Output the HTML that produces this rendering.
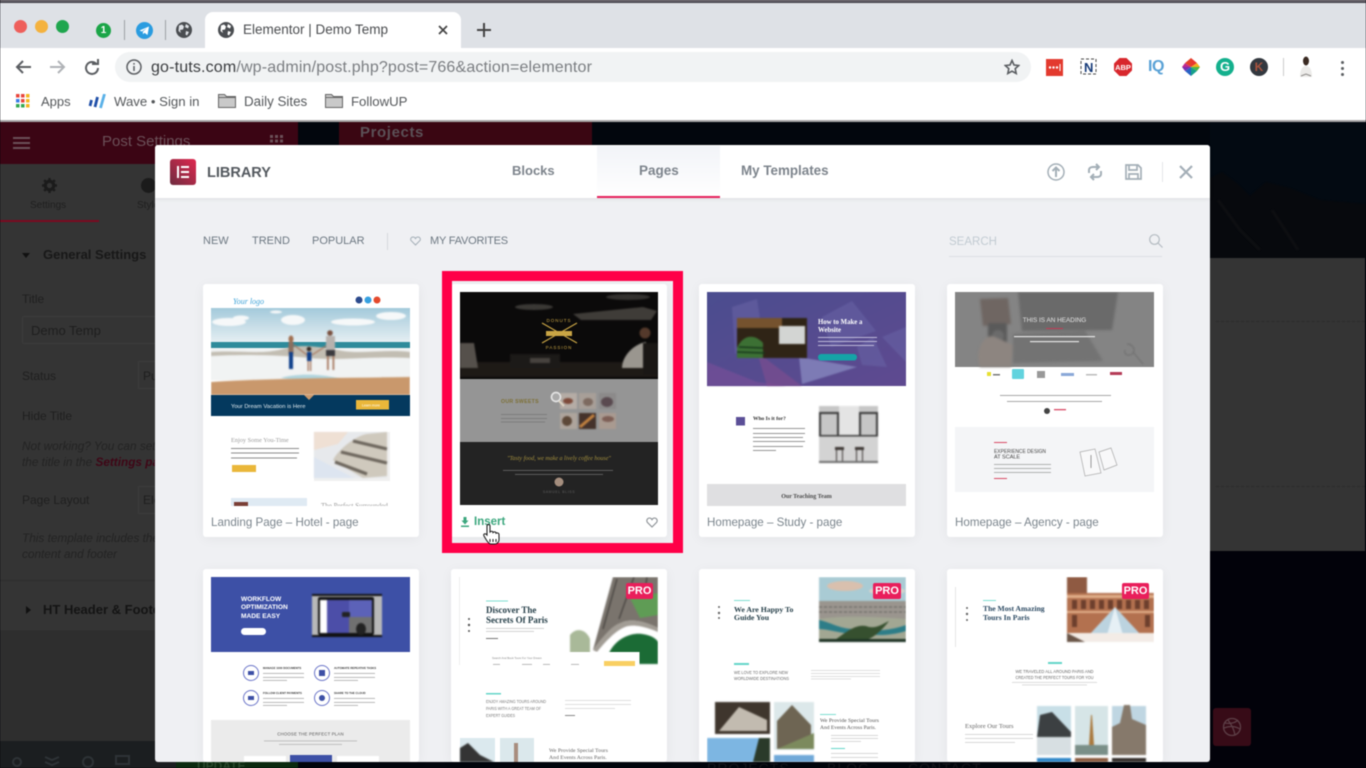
<!DOCTYPE html>
<html lang="en"><head><meta charset="utf-8"><title>Elementor | Demo Temp</title>
<style>
*{box-sizing:border-box}
html,body{margin:0;padding:0;width:1366px;height:768px;overflow:hidden;background:#02020a}
body{font-family:"Liberation Sans",sans-serif}
#w{position:absolute;left:0;top:0;width:1366px;height:768px;overflow:hidden;filter:blur(.5px)}
.a{position:absolute}
.t{position:absolute;white-space:nowrap;line-height:1}
svg{position:absolute;display:block;overflow:hidden}
.card{position:absolute;width:216px;background:#fff;border-radius:3px;box-shadow:0 2px 12px rgba(0,0,0,.05)}
.lbl{position:absolute;font-size:11.6px;color:#7b858d;white-space:nowrap;line-height:1}
.ph{filter:blur(.7px)}
</style></head><body><div id="w">

<!-- page behind -->
<div class="a" style="left:0;top:122px;width:1366px;height:646px;background:#02060d"></div>
<div class="a" style="left:1210px;top:122px;width:156px;height:136px;background:#030a12"></div>
<svg style="left:1210px;top:170px" width="156" height="88" viewBox="0 0 156 88"><path class="ph" d="M0 8 L12 2 L28 14 L40 26 L56 12 L80 18 L110 30 L156 34 V88 H0Z" fill="#07090d"/><path class="ph" d="M8 30 L30 60 L50 80 M62 40 L88 80" stroke="#0e0f12" stroke-width="3" fill="none"/></svg>
<div class="a" style="left:1210px;top:258px;width:155px;height:293px;background:#343434"></div>
<div class="a" style="left:1216px;top:321px;width:149px;border-top:1px dashed #2b2b2b"></div>
<div class="a" style="left:1216px;top:486px;width:149px;border-top:1px dashed #2b2b2b"></div>
<div class="a" style="left:1210px;top:551px;width:156px;height:217px;background:#02020a"></div>
<div class="a" style="left:1213px;top:708px;width:38px;height:38px;background:#370b17;border-radius:3px"></div>
<svg style="left:1222px;top:717px" width="20" height="20" viewBox="0 0 20 20" fill="none" stroke="#5d3f47" stroke-width="1.3"><circle cx="10" cy="10" r="8.5"/><path d="M3 6c5 1 10 0 13-3M2 11c5-2 11-2 16 1M6 3c3 4 6 9 7 15"/></svg>
<div class="a" style="left:339px;top:122px;width:253px;height:24px;background:#3a0612"></div>
<div class="t" style="left:360px;top:125px;font-size:15px;font-weight:bold;color:#5b5157;letter-spacing:.6px">Projects</div>

<!-- left panel -->
<div class="a" style="left:0;top:122px;width:298px;height:42px;background:#3b0514"></div>
<div class="a" style="left:13px;top:137px;width:17px;height:2px;background:#6b5058;box-shadow:0 5px #6b5058,0 10px #6b5058"></div>
<div class="t" style="left:102px;top:134px;font-size:15px;color:#6b5058">Post Settings</div>
<svg style="left:270px;top:135px" width="15" height="12"><g fill="#6b5058"><rect width="3" height="3"/><rect x="5" width="3" height="3"/><rect x="10" width="3" height="3"/><rect y="4.500" width="3" height="3"/><rect x="5" y="4.500" width="3" height="3"/><rect x="10" y="4.500" width="3" height="3"/></g></svg>
<div class="a" style="left:0;top:164px;width:298px;height:477px;background:#343434"></div>
<svg style="left:42px;top:178px" width="15" height="15" viewBox="0 0 16 16"><circle cx="8" cy="8" r="4.500" fill="none" stroke="#1b1b1b" stroke-width="3.400"/><path d="M8 0v3M8 13v3M0 8h3M13 8h3M2.300 2.300l2 2M11.700 11.700l2 2M2.300 13.700l2-2M11.700 4.300l2-2" stroke="#1b1b1b" stroke-width="2.600"/></svg>
<div class="t" style="left:30px;top:201px;font-size:10px;color:#1f1f1f">Settings</div>
<div class="a" style="left:141px;top:178px;width:15px;height:15px;border-radius:50%;background:#1b1b1b"></div>
<div class="t" style="left:137px;top:201px;font-size:10px;color:#1f1f1f">Style</div>
<div class="a" style="left:0;top:220px;width:99px;height:2px;background:#7a0a20"></div>
<div class="a" style="left:22px;top:253px;border:4px solid transparent;border-top:5px solid #111;border-bottom:0"></div>
<div class="t" style="left:43px;top:248px;font-size:13px;font-weight:bold;color:#181818">General Settings</div>
<div class="t" style="left:22px;top:293px;font-size:12px;color:#1f1f1f">Title</div>
<div class="a" style="left:22px;top:316px;width:200px;height:28px;border:1px solid #3c3c3c;border-radius:2px"></div>
<div class="t" style="left:31px;top:324px;font-size:13px;color:#1e1e1e">Demo Temp</div>
<div class="t" style="left:22px;top:370px;font-size:12px;color:#1f1f1f">Status</div>
<div class="a" style="left:138px;top:361px;width:60px;height:28px;border:1px solid #3c3c3c"></div>
<div class="t" style="left:143px;top:370px;font-size:12px;color:#1e1e1e">Published</div>
<div class="t" style="left:22px;top:410px;font-size:12px;color:#1f1f1f">Hide Title</div>
<div class="t" style="left:22px;top:441px;font-size:11.800px;font-style:italic;color:#232323">Not working? You can set a different selector for</div>
<div class="t" style="left:22px;top:457px;font-size:11.800px;font-style:italic;color:#232323">the title in the <b style="color:#3f0616">Settings page</b></div>
<div class="t" style="left:22px;top:494px;font-size:12px;color:#1f1f1f">Page Layout</div>
<div class="a" style="left:138px;top:486px;width:60px;height:28px;border:1px solid #3c3c3c"></div>
<div class="t" style="left:143px;top:494px;font-size:12px;color:#1e1e1e">Elementor</div>
<div class="t" style="left:22px;top:533px;font-size:11.800px;font-style:italic;color:#232323">This template includes the header, full-width</div>
<div class="t" style="left:22px;top:549px;font-size:11.800px;font-style:italic;color:#232323">content and footer</div>
<div class="a" style="left:0;top:580px;width:298px;height:1px;background:#2e2e2e"></div>
<div class="a" style="left:0;top:630px;width:298px;height:1px;background:#303030"></div>
<div class="a" style="left:26px;top:606px;border:4px solid transparent;border-left:5px solid #111;border-right:0"></div>
<div class="t" style="left:43px;top:603px;font-size:13px;font-weight:bold;color:#141414">HT Header &amp; Footer</div>
<div class="a" style="left:0;top:631px;width:298px;height:110px;background:#2e2e2e"></div>
<div class="a" style="left:0;top:741px;width:298px;height:27px;background:#1b1e20"></div>
<svg style="left:10px;top:754px" width="130" height="14" fill="none" stroke="#2e3336" stroke-width="2"><circle cx="7" cy="8" r="4"/><path d="M35 3l7 3 7-3M35 8l7 3 7-3"/><circle cx="78" cy="8" r="5"/><rect x="106" y="2" width="13" height="8"/></svg>
<div class="a" style="left:176px;top:741px;width:122px;height:27px;background:#0c2b10"></div>
<div class="t" style="left:197px;top:760px;font-size:12px;font-weight:bold;color:#2b4a2e">UPDATE</div>
<div class="t" style="left:707px;top:761px;font-size:14px;color:#17171c;letter-spacing:1px">PROJECTS</div>
<div class="t" style="left:827px;top:761px;font-size:14px;color:#17171c;letter-spacing:1px">BLOG</div>
<div class="t" style="left:908px;top:761px;font-size:14px;color:#17171c;letter-spacing:1px">CONTACT</div>

<!-- browser chrome -->
<div class="a" style="left:0;top:0;width:1366px;height:122px;background:#fff"></div>
<div class="a" style="left:0;top:0;width:1366px;height:1px;background:#9b9499"></div>
<div class="a" style="left:0;top:1px;width:1366px;height:2px;background:#4a4750"></div>
<div class="a" style="left:0;top:3px;width:1366px;height:45px;background:#dee1e6"></div>
<div class="a" style="left:0;top:120px;width:1366px;height:2px;background:#a9a7a8"></div>
<div class="a" style="left:14px;top:20px;width:13px;height:13px;border-radius:50%;background:#ee5f5b"></div>
<div class="a" style="left:35px;top:20px;width:13px;height:13px;border-radius:50%;background:#f4b23e"></div>
<div class="a" style="left:56px;top:20px;width:13px;height:13px;border-radius:50%;background:#1fa64e"></div>
<div class="a" style="left:96px;top:23px;width:15px;height:15px;border-radius:50%;background:#1ba548;color:#fff;font-size:10px;font-weight:bold;text-align:center;line-height:15px">1</div>
<div class="a" style="left:124px;top:20px;width:1px;height:20px;background:#9da0a5"></div>
<svg style="left:136px;top:22px" width="17" height="17" viewBox="0 0 17 17"><circle cx="8.500" cy="8.500" r="8.500" fill="#2a9ce0"/><path d="M3.500 8.500L13 4.500 11.500 13 8.500 10.800 7 12.300 6.800 9.800 11 6 5.800 9.500z" fill="#fff"/></svg>
<div class="a" style="left:165px;top:20px;width:1px;height:20px;background:#9da0a5"></div>
<svg style="left:176px;top:22px" width="16" height="16" viewBox="0 0 16 16"><circle cx="8" cy="8" r="8" fill="#4a4d51"/><path d="M3 3.500l3-1 2 2-1 3-3 .5 1 3-2.500-2zM10 2l3 2-1 2.500-3-1.500zM10 9l3 1-2 3.500-1.500-1z" fill="#dee1e6"/></svg>
<div class="a" style="left:205px;top:12px;width:256px;height:37px;background:#fff;border-radius:8px 8px 0 0"></div>
<svg style="left:218px;top:22px" width="16" height="16" viewBox="0 0 16 16"><circle cx="8" cy="8" r="8" fill="#4a4d51"/><path d="M3 3.500l3-1 2 2-1 3-3 .5 1 3-2.500-2zM10 2l3 2-1 2.500-3-1.500zM10 9l3 1-2 3.500-1.500-1z" fill="#fff"/></svg>
<div class="t" style="left:243px;top:23px;font-size:13.500px;color:#4b4d50">Elementor | Demo Temp</div>
<svg style="left:438px;top:25px" width="10" height="10" stroke="#444" stroke-width="1.700"><path d="M1 1l8 8M9 1l-8 8"/></svg>
<svg style="left:477px;top:23px" width="14" height="14" stroke="#444" stroke-width="2"><path d="M7 0v14M0 7h14"/></svg>

<svg style="left:15px;top:59px" width="90" height="16" fill="none" stroke-width="2"><path d="M16 8H2M8 2L2 8l6 6" stroke="#5b5e62"/><path d="M35 8h14M43 2l6 6-6 6" stroke="#b0b3b7"/><path d="M81.500 4a6 6 0 1 0 1.500 4M77 4h6V-1" stroke="#5b5e62" transform="translate(0 1)"/></svg>
<div class="a" style="left:115px;top:52px;width:916px;height:30px;background:#f1f3f4;border-radius:15px"></div>
<svg style="left:126px;top:59px" width="16" height="16" fill="none" stroke="#5b5e62" stroke-width="1.500"><circle cx="8" cy="8" r="7"/><path d="M8 7v5M8 4v1.600"/></svg>
<div class="t" style="left:151px;top:60px;font-size:16px;color:#7a7d81;letter-spacing:.16px"><span style="color:#3a3c3f">go-tuts.com</span>/wp-admin/post.php?post=766&amp;action=elementor</div>
<svg style="left:1004px;top:59px" width="16" height="16" viewBox="0 0 16 16" fill="none" stroke="#5b5e62" stroke-width="1.600"><path d="M8 1.500l2 4.500 4.800.5-3.600 3.200 1 4.800L8 12.200 3.800 14.500l1-4.800L1.200 6.500 6 6z"/></svg>
<svg style="left:1046px;top:59px" width="17" height="17"><rect width="17" height="17" fill="#e33a2e"/><g fill="#fff"><circle cx="4" cy="8.500" r="1.200"/><circle cx="7.500" cy="8.500" r="1.200"/><circle cx="11" cy="8.500" r="1.200"/><rect x="13.500" y="5" width="1" height="7"/></g></svg>
<svg style="left:1080px;top:58px" width="18" height="18"><rect x="1" y="1" width="15" height="15" fill="none" stroke="#444" stroke-dasharray="3 2"/><text x="4" y="14" font-family="Liberation Sans" font-size="13" font-weight="bold" fill="#153a78">N</text></svg>
<svg style="left:1114px;top:58px" width="18" height="18" viewBox="0 0 18 18"><path d="M5.500 0h7L18 5.500v7L12.500 18h-7L0 12.500v-7z" fill="#d8272d"/><text x="9" y="12" text-anchor="middle" font-family="Liberation Sans" font-size="7.500" font-weight="bold" fill="#fff">ABP</text></svg>
<div class="t" style="left:1148px;top:59px;font-size:16px;font-weight:bold;color:#5aa2d6;letter-spacing:-.5px">IQ</div>
<svg style="left:1182px;top:58px" width="18" height="18" viewBox="0 0 18 18"><path d="M9 0L15 5 9 9z" fill="#e8382e"/><path d="M15 5l3 4H9z" fill="#f2b01e"/><path d="M18 9l-3 4-6-4z" fill="#4cb648"/><path d="M15 13l-6 5V9z" fill="#15a08a"/><path d="M9 18l-6-5 6-4z" fill="#2962c4"/><path d="M3 13L0 9h9z" fill="#7b2fb2"/><path d="M0 9l3-4 6 4z" fill="#c02a8d"/><path d="M3 5l6-5v9z" fill="#e3422a"/></svg>
<div class="a" style="left:1216px;top:58px;width:18px;height:18px;border-radius:50%;background:#14b08d;color:#fff;font-size:13px;font-weight:bold;text-align:center;line-height:18px">G</div>
<div class="a" style="left:1250px;top:58px;width:18px;height:18px;border-radius:50%;background:#33383f;color:#a9543f;font-size:12px;font-weight:bold;text-align:center;line-height:18px">K</div>
<div class="a" style="left:1283px;top:58px;width:1px;height:18px;background:#ccc"></div>
<svg style="left:1297px;top:56px" width="18" height="22"><ellipse cx="9" cy="5" rx="3" ry="4.500" fill="#3a2a22"/><path d="M3 21c0-7 2-11 6-11s6 4 6 11z" fill="#ecebe9"/><path d="M4 20l5-2 5 2" stroke="#8d8a88" fill="none"/></svg>
<div class="a" style="left:1341px;top:61px;width:3px;height:3px;border-radius:50%;background:#5b5e62;box-shadow:0 6px #5b5e62,0 12px #5b5e62"></div>

<svg style="left:16px;top:94px" width="14" height="14"><g><rect width="3.500" height="3.500" fill="#e8453c"/><rect x="5" width="3.500" height="3.500" fill="#e8453c"/><rect x="10" width="3.500" height="3.500" fill="#f3b61f"/><rect y="5" width="3.500" height="3.500" fill="#3a7de8"/><rect x="5" y="5" width="3.500" height="3.500" fill="#e8453c"/><rect x="10" y="5" width="3.500" height="3.500" fill="#f3b61f"/><rect y="10" width="3.500" height="3.500" fill="#34a853"/><rect x="5" y="10" width="3.500" height="3.500" fill="#34a853"/><rect x="10" y="10" width="3.500" height="3.500" fill="#f3b61f"/></g></svg>
<div class="t" style="left:41px;top:95px;font-size:13px;color:#55585b">Apps</div>
<svg style="left:88px;top:94px" width="18" height="15" stroke-width="2.800" fill="none"><path d="M3.500 6l-1.500 6" stroke="#1f4fa8"/><path d="M9.500 3L7 13" stroke="#1f4fa8"/><path d="M16.500 0l-4 14" stroke="#5ab1e8"/></svg>
<div class="t" style="left:114px;top:95px;font-size:13.200px;color:#55585b">Wave • Sign in</div>
<svg style="left:218px;top:93px" width="18" height="15"><path d="M.5 1.500h6l2 2h9v11H.5z" fill="#c9c9c9" stroke="#666"/><path d="M.5 4.500h17" stroke="#666"/></svg>
<div class="t" style="left:244px;top:95px;font-size:13.400px;color:#55585b">Daily Sites</div>
<svg style="left:325px;top:93px" width="18" height="15"><path d="M.5 1.500h6l2 2h9v11H.5z" fill="#c9c9c9" stroke="#666"/><path d="M.5 4.500h17" stroke="#666"/></svg>
<div class="t" style="left:351px;top:95px;font-size:13.200px;color:#55585b">FollowUP</div>

<!-- modal -->
<div class="a" style="left:155px;top:145px;width:1055px;height:617px;background:#eff0f3;border-radius:3px;overflow:hidden"></div>
<div class="a" style="left:155px;top:145px;width:1055px;height:53px;background:#fff;border-radius:3px 3px 0 0;box-shadow:0 1px 4px rgba(0,0,0,.08)"></div>
<div class="a" style="left:170px;top:159px;width:26px;height:26px;border-radius:3px;background:linear-gradient(45deg,#6d2c3f,#e0284f)"></div>
<svg style="left:177px;top:166px" width="13" height="12" fill="#fff"><rect x="0" y="0" width="2" height="12"/><rect x="4" y="0" width="8" height="2"/><rect x="4" y="5" width="8" height="2"/><rect x="4" y="10" width="8" height="2"/></svg>
<div class="t" style="left:207px;top:166px;font-size:14.500px;font-weight:bold;color:#54595f">LIBRARY</div>
<div class="a" style="left:597px;top:146px;width:123px;height:52px;background:linear-gradient(#f2f4f8,#fff)"></div>
<div class="a" style="left:597px;top:196px;width:123px;height:2px;background:#e61f5b"></div>
<div class="t" style="left:512px;top:164px;font-size:13px;font-weight:bold;color:#7d848c">Blocks</div>
<div class="t" style="left:639px;top:164px;font-size:13.500px;font-weight:bold;color:#7d848c">Pages</div>
<div class="t" style="left:741px;top:164px;font-size:13.400px;font-weight:bold;color:#7d848c">My Templates</div>
<svg style="left:1047px;top:163px" width="18" height="18" fill="none" stroke="#a4afb7" stroke-width="1.500"><circle cx="9" cy="9" r="8"/><path d="M9 14V5M5.500 8L9 4.500 12.500 8" stroke-width="2"/></svg>
<svg style="left:1087px;top:163px" width="16" height="18" fill="none" stroke="#a4afb7" stroke-width="2"><path d="M2 10V7c0-2 2-3 4-3h5M9 1l3 3-3 3M14 8v3c0 2-2 3-4 3H5M7 17l-3-3 3-3"/></svg>
<svg style="left:1125px;top:164px" width="17" height="16" fill="none" stroke="#a4afb7" stroke-width="1.700"><path d="M1 1h12l3 3v11H1z"/><path d="M4 1v5h8V1M4 15v-5h9v5"/></svg>
<div class="a" style="left:1162px;top:162px;width:1px;height:20px;background:#e4e6e9"></div>
<svg style="left:1179px;top:165px" width="14" height="14" stroke="#a4afb7" stroke-width="2.200"><path d="M1 1l12 12M13 1L1 13"/></svg>

<div class="t" style="left:203px;top:236px;font-size:11px;color:#6d7882">NEW</div>
<div class="t" style="left:252px;top:236px;font-size:11px;color:#6d7882">TREND</div>
<div class="t" style="left:312px;top:236px;font-size:11px;color:#6d7882">POPULAR</div>
<div class="a" style="left:387px;top:233px;width:1px;height:17px;background:#d5d8dc"></div>
<svg style="left:410px;top:236px" width="11" height="10" fill="none" stroke="#a4afb7"><path d="M5.500 9L1 4.500C0 2.500 1.500 1 3 1c1 0 2 .5 2.500 1.500C6 1.500 7 1 8 1c1.500 0 3 1.500 2 3.500z"/></svg>
<div class="t" style="left:430px;top:236px;font-size:11px;color:#6d7882;letter-spacing:-.2px">MY FAVORITES</div>
<div class="t" style="left:949px;top:237px;font-size:11.500px;color:#c2cbd2">SEARCH</div>
<svg style="left:1149px;top:234px" width="14" height="14" fill="none" stroke="#b5bcc2" stroke-width="1.200"><circle cx="5.500" cy="5.500" r="4.800"/><path d="M9 9l4.500 4.500"/></svg>
<div class="a" style="left:949px;top:256px;width:213px;height:1px;background:#dcdfe3"></div>

<!-- cards -->
<div class="card" style="left:203px;top:284px;height:253px"></div>
<div class="card" style="left:451px;top:284px;height:253px"></div>
<div class="card" style="left:699px;top:284px;height:253px"></div>
<div class="card" style="left:947px;top:284px;height:253px"></div>
<div class="card" style="left:203px;top:569px;height:193px"></div>
<div class="card" style="left:451px;top:569px;height:193px"></div>
<div class="card" style="left:699px;top:569px;height:193px"></div>
<div class="card" style="left:947px;top:569px;height:193px"></div>

<!-- thumb 1 -->
<svg style="left:211px;top:292px" width="199" height="214" viewBox="0 0 199 214">
<defs><linearGradient id="sky" x1="0" y1="0" x2="0" y2="1"><stop offset="0" stop-color="#a4cadb"/><stop offset="1" stop-color="#e9f1f4"/></linearGradient></defs>
<rect width="199" height="214" fill="#fff"/>
<text x="22" y="12" font-family="Liberation Serif" font-style="italic" font-size="8" fill="#3ea3d8">Your logo</text>
<circle cx="148" cy="8" r="3.500" fill="#2c4a8c"/><circle cx="157" cy="8" r="3.500" fill="#36a0e0"/><circle cx="166" cy="8" r="3.500" fill="#e4492c"/>
<rect y="16" width="199" height="36" fill="url(#sky)"/>
<g class="ph" fill="#f6f8f9"><ellipse cx="18" cy="30" rx="17" ry="4"/><ellipse cx="82" cy="28" rx="12" ry="5"/><ellipse cx="142" cy="30" rx="22" ry="3.500"/><ellipse cx="180" cy="24" rx="15" ry="4"/><ellipse cx="30" cy="26" rx="8" ry="2.500"/><ellipse cx="65" cy="20" rx="6" ry="1.500"/></g>
<rect y="50" width="199" height="6" fill="#2f8b9b"/>
<rect y="56" width="199" height="32" fill="#f1f3f3"/>
<path class="ph" d="M0 60c30-2 50 3 72-3s40-1 60 2 45-2 67 1v6c-40-2-70 3-100 0S30 62 0 64z" fill="#c2bdb2"/>
<path class="ph" d="M70 86c20-6 55-4 75 7l-12 1c-20-2-40-3-63-8z" fill="#b0d4dd"/>
<path class="ph" d="M0 90c60-4 130-4 199-5v18H0z" fill="#c9986c"/>
<rect y="103" width="199" height="21" fill="#04395e"/>
<path d="M93 103h10l-5 5z" fill="#c9986c"/>
<text x="20" y="116" font-family="Liberation Sans" font-size="5.800" fill="#dfe9ee">Your Dream Vacation is Here</text>
<rect x="145" y="108" width="33" height="9.500" fill="#eab73a"/>
<text x="151" y="114.500" font-family="Liberation Sans" font-size="3.500" fill="#fff">Learn more</text>
<g class="ph"><ellipse cx="80" cy="47" rx="2.500" ry="3.500" fill="#a06f50"/><rect x="77.500" y="50" width="5" height="12" fill="#8a6f60"/><rect x="78" y="60" width="4" height="17" fill="#0f3f8a"/>
<circle cx="98" cy="57" r="2.300" fill="#352a25"/><rect x="96" y="60" width="4.500" height="9" fill="#0f3f8a"/><rect x="96.500" y="69" width="1.300" height="10" fill="#a87a62"/><rect x="99" y="69" width="1.300" height="10" fill="#a87a62"/>
<circle cx="119" cy="41" r="2.800" fill="#7a5140"/><rect x="115" y="44" width="9" height="15" fill="#b7b2ae"/><rect x="115" y="58" width="9" height="6" fill="#3a3a3e"/><rect x="116" y="64" width="1.800" height="14" fill="#a87a62"/><rect x="121.500" y="64" width="1.800" height="14" fill="#a87a62"/>
<path d="M83 53l13 10M101 63l14-9" stroke="#a87a62" stroke-width="1.200"/></g>
<text x="20" y="150" font-family="Liberation Serif" font-size="6.300" fill="#9c9c9c">Enjoy Some You-Time</text>
<g fill="#8d8d8d"><rect x="20" y="156" width="68" height="1"/><rect x="20" y="160.500" width="68" height="1"/><rect x="20" y="165.500" width="66" height="1"/></g>
<rect x="21" y="173" width="24" height="7" fill="#eab73a"/>
<rect x="103" y="140" width="76" height="49" fill="#f0f0f0"/>
<g class="ph"><rect x="103" y="140" width="73" height="46" fill="#e7e9ec"/>
<path d="M122 168c5-10 22-24 34-26l20-2v44l-24 2z" fill="#cfc9bd"/>
<g stroke="#6d665d" stroke-width="3.200" fill="none"><path d="M142 149l34 8M130 160l46 11M124 170l32 12"/></g>
<path d="M103 140h34l-10 12-24 6z" fill="#efe0d4"/>
<path d="M103 165l40 21H103z" fill="#dde5f0"/></g>
<rect x="20" y="206" width="76" height="8" fill="#dfeaf3"/><rect x="23" y="210" width="14" height="4" fill="#7a3f36"/>
<text x="110" y="216" font-family="Liberation Serif" font-size="7" fill="#999">The Perfect Surrounded</text>
</svg>
<div class="lbl" style="left:211px;top:517px">Landing Page – Hotel - page</div>

<!-- thumb 2 -->
<svg style="left:460px;top:292px" width="198" height="214" viewBox="0 0 198 214">
<rect width="198" height="87" fill="#0b0a0a"/>
<g class="ph">
<ellipse cx="74" cy="15" rx="19" ry="3" fill="#3a3835"/><ellipse cx="168" cy="5" rx="22" ry="3" fill="#33312f"/><path d="M113 22l70-7 14 4-6 9-70 0z" fill="#3f3c38"/>
<rect x="0" y="70" width="198" height="15" fill="#1e1a16"/>
<path d="M0 51h14l4 25H0z" fill="#55504b"/>
<rect x="50" y="62" width="50" height="14" fill="#1c1a18"/><rect x="70" y="66" width="20" height="5" fill="#47423e"/>
<path d="M162 76c0-12 12-24 24-26l-1 26z" fill="#9a968f"/>
<path d="M183 51h15v32h-15z" fill="#1a1715"/>
<circle cx="185" cy="41" r="5.500" fill="#54392b"/>
</g>
<g stroke="#c9a545" stroke-width="1.200" fill="none"><path d="M82 31l35 20M117 31L82 51"/><rect x="86" y="39" width="26" height="5" fill="#c9a545" stroke="none"/></g>
<text x="99" y="30" text-anchor="middle" font-family="Liberation Sans" font-size="4.500" letter-spacing="1" fill="#c9a545">DONUTS</text>
<text x="99" y="57" text-anchor="middle" font-family="Liberation Sans" font-size="4.500" letter-spacing="1" fill="#c9a545">PASSION</text>
<rect y="87" width="198" height="63" fill="#959595"/>
<text x="41" y="111" font-family="Liberation Sans" font-size="5.200" font-weight="bold" letter-spacing=".3" fill="#7d7035">OUR SWEETS</text>
<g fill="#7d7d7d"><rect x="41" y="122" width="46" height="1"/><rect x="41" y="126" width="46" height="1"/><rect x="41" y="129.500" width="44" height="1"/></g>
<g class="ph"><rect x="100" y="101" width="17" height="16" fill="#b5aca5"/><rect x="119" y="101" width="17" height="16" fill="#a89f98"/><rect x="139" y="101" width="17" height="16" fill="#8c8a8a"/><rect x="100" y="121" width="17" height="16" fill="#aea49c"/><rect x="119" y="121" width="17" height="16" fill="#45322b"/><rect x="139" y="121" width="17" height="16" fill="#a99a90"/>
<ellipse cx="108" cy="109" rx="5" ry="3" fill="#7d4a3a"/><ellipse cx="128" cy="110" rx="5" ry="4" fill="#7d6a60"/><ellipse cx="147" cy="110" rx="6" ry="5" fill="#5a4a50"/><ellipse cx="107" cy="129" rx="5" ry="5" fill="#5d4838"/><path d="M120 135l14-12" stroke="#c08040" stroke-width="3"/><ellipse cx="148" cy="127" rx="6" ry="3" fill="#7e5f56"/></g>
<circle cx="96" cy="105" r="4.500" fill="rgba(255,255,255,.2)" stroke="#e2e2e2" stroke-width="1.700"/><path d="M99 109l5 5" stroke="#d9d0c0" stroke-width="2"/>
<rect y="150" width="198" height="63" fill="#232323"/>
<text x="99" y="168" text-anchor="middle" font-family="Liberation Serif" font-style="italic" font-size="6" fill="#a38f3e">"Tasty food, we make a lively coffee house"</text>
<g fill="#6a6a6a"><rect x="43" y="178" width="110" height=".8"/><rect x="55" y="182" width="88" height=".8"/></g>
<circle cx="99" cy="190" r="4.500" fill="#a58e7e"/>
<text x="99" y="201" text-anchor="middle" font-family="Liberation Sans" font-size="3.500" letter-spacing=".6" fill="#5d5d5d">SAMUEL BLISS</text>
</svg>
<svg style="left:460px;top:517px" width="11" height="11" fill="#3ca77e"><path d="M3.500 0h3v3.500h2L5 7.500 1.500 3.500h2zM1 8.500h8V10H1z"/></svg>
<div class="t" style="left:474px;top:517px;font-size:11.500px;font-weight:bold;color:#3ca77e">Insert</div>
<svg style="left:646px;top:517px" width="12" height="11" fill="none" stroke="#8a8f94" stroke-width="1.100"><path d="M6 10L1.300 5.300C0 3 1.700 1 3.500 1 4.600 1 5.500 1.600 6 2.600 6.500 1.600 7.400 1 8.500 1 10.300 1 12 3 10.700 5.300z"/></svg>

<!-- thumb 3 -->
<svg style="left:707px;top:292px" width="199" height="214" viewBox="0 0 199 214">
<defs><linearGradient id="pu" x1="0" y1="0" x2="1" y2="1"><stop offset="0" stop-color="#4b4d8f"/><stop offset="1" stop-color="#5f4a90"/></linearGradient></defs>
<rect width="199" height="214" fill="#fff"/>
<rect width="199" height="94" fill="url(#pu)"/>
<g class="ph" fill="#6762a4" opacity=".6"><path d="M25 15l25-8 6 40-28 15z"/><path d="M115 25l30-16 24 30-45 16z"/><path d="M150 55l16-10 14 30-25-2z"/><path d="M175 45l24-10v35z"/></g>
<path class="ph" d="M92 65l58 10-55 17z" fill="#7d7bb5"/>
<path class="ph" d="M0 70l50 20 30 4H0z" fill="#7c4f99" opacity=".6"/><path class="ph" d="M50 60l45 34H60z" fill="#8a4d8f" opacity=".5"/>
<g class="ph"><rect x="30" y="26" width="70" height="40" fill="#2f2416"/>
<rect x="30" y="26" width="45" height="10" fill="#75522e"/>
<path d="M30 56c6-14 18-14 26-5v15H30z" fill="#3c7034"/>
<g stroke="#17381a" stroke-width="1.500"><path d="M32 55l24 1M30 60l28 1"/></g>
<rect x="72" y="34" width="26" height="18" fill="#d3d5d3"/></g>
<text x="111" y="32" font-family="Liberation Serif" font-weight="bold" font-size="6.800" fill="#fff">How to Make a</text>
<text x="111" y="40" font-family="Liberation Serif" font-weight="bold" font-size="6.800" fill="#fff">Website</text>
<g fill="#c9c5e0"><rect x="111" y="45" width="59" height=".9"/><rect x="111" y="49" width="59" height=".9"/><rect x="111" y="53" width="56" height=".9"/></g>
<rect x="111" y="62" width="39" height="6.500" rx="3.200" fill="#15a4a7"/>
<rect x="29" y="125" width="9" height="8.500" fill="#5b4f97"/>
<text x="46" y="128" font-family="Liberation Serif" font-weight="bold" font-size="5.500" fill="#333">Who Is it for?</text>
<g fill="#8b8b8b"><rect x="46" y="136" width="52" height=".9"/><rect x="46" y="141" width="52" height=".9"/><rect x="46" y="145" width="50" height=".9"/><rect x="46" y="149" width="52" height=".9"/><rect x="46" y="154" width="50" height=".9"/><rect x="46" y="158" width="23" height=".9"/></g>
<g class="ph"><rect x="112" y="114" width="59" height="57" fill="#c6c6c6"/>
<rect x="132" y="114" width="20" height="30" fill="#e4e4e4"/>
<g fill="#3a3a3a"><rect x="112" y="120" width="20" height="2"/><rect x="152" y="120" width="19" height="2"/><rect x="112" y="122" width="2" height="22"/><rect x="130" y="122" width="2" height="22"/><rect x="152" y="122" width="2" height="22"/><rect x="169" y="122" width="2" height="22"/><rect x="112" y="143" width="59" height="1.500"/></g>
<rect x="112" y="145" width="59" height="26" fill="#d3d3d3"/>
<g fill="#3e3835"><rect x="128" y="155" width="9" height="3"/><rect x="148" y="155" width="9" height="3"/><path d="M129 158v11h1v-11zM135 158v11h1v-11zM149 158v11h1v-11zM155 158v11h1v-11z"/></g>
<rect x="112" y="169" width="59" height="2" fill="#6e6e6e"/></g>
<rect y="192" width="199" height="22" fill="#dfdfe1"/>
<text x="99.500" y="206" text-anchor="middle" font-family="Liberation Serif" font-weight="bold" font-size="6" fill="#4b4b4b">Our Teaching Team</text>
</svg>
<div class="lbl" style="left:707px;top:517px">Homepage – Study - page</div>

<!-- thumb 4 -->
<svg style="left:955px;top:292px" width="199" height="214" viewBox="0 0 199 214">
<rect width="199" height="214" fill="#fff"/>
<rect width="199" height="75" fill="#848484"/>
<g class="ph" style="filter:blur(1.2px)">
<path d="M63 0h100l-6 38-90 1z" fill="#6a6a6a"/>
<path d="M58 42l72-3 18 30-90 2z" fill="#737373"/>
<path d="M25 7l28-1 3 26-28 2z" fill="#6f6662"/>
<rect x="33" y="31" width="19" height="31" rx="2" fill="#5a5a5a"/><circle cx="43" cy="44" r="6" fill="#6b6b6b"/>
<path d="M25 75c-6-15 4-35 15-30l18 8-2 22z" fill="#8d8580"/>
</g>
<path class="ph" d="M172 52c5 0 9 5 6 9s-10 2-8-3M178 60l10 12" stroke="#6c6c6c" fill="none" stroke-width=".9"/>
<text x="99.500" y="30" text-anchor="middle" font-family="Liberation Sans" font-size="6.400" fill="#e5e5e5">THIS IS AN HEADING</text>
<rect x="91" y="36" width="17" height="1" fill="#c23a55"/>
<g fill="#e5e5e5"><rect x="59" y="44" width="81" height="1.200"/><rect x="75" y="49" width="49" height="1.200"/></g>
<rect x="32" y="80" width="4" height="4" fill="#e7e032"/><rect x="38" y="82" width="7" height="1.500" fill="#777"/>
<rect x="57" y="77" width="12" height="10" rx="1" fill="#62d3de"/>
<rect x="82" y="79" width="8" height="7" fill="#999"/>
<rect x="106" y="81" width="13" height="3" fill="#8aa8d8"/>
<rect x="131" y="82" width="11" height="1.500" fill="#bbb"/>
<rect x="155" y="80" width="12" height="3" fill="#b53c57"/>
<g fill="#9d9d9d"><rect x="45" y="103" width="111" height=".9"/><rect x="52" y="109" width="95" height=".9"/></g>
<circle cx="92" cy="119" r="3" fill="#444"/><rect x="99" y="117" width="12" height="1.300" fill="#d94a65"/>
<rect y="135" width="199" height="65" fill="#f4f5f7"/>
<rect x="39" y="150" width="13" height="1" fill="#d94a65"/>
<text x="39" y="161" font-family="Liberation Sans" font-size="5.500" textLength="52" lengthAdjust="spacingAndGlyphs" fill="#444">EXPERIENCE DESIGN</text>
<text x="39" y="166.500" font-family="Liberation Sans" font-size="5.500" fill="#444">AT SCALE</text>
<g fill="#aaa"><rect x="39" y="172" width="57" height=".9"/><rect x="39" y="176" width="57" height=".9"/><rect x="39" y="180" width="57" height=".9"/></g>
<rect x="39" y="186" width="13" height="1" fill="#d94a65"/>
<g fill="#f8f8f9" stroke="#aaa" stroke-width=".7"><path d="M144 160l12-4 6 17-13 5z"/><path d="M125 160l15-3 6 24-16 3z"/></g>
<path d="M136 163v13" stroke="#999"/>
</svg>
<div class="lbl" style="left:955px;top:517px">Homepage – Agency - page</div>

<!-- thumb 5 -->
<svg style="left:211px;top:577px" width="199" height="185" viewBox="0 0 199 185">
<rect width="199" height="185" fill="#fff"/>
<rect width="199" height="75" fill="#3d50a6"/>
<g fill="#fff"><text x="30" y="24" font-family="Liberation Sans" font-size="6.600" font-weight="bold">WORKFLOW</text><text x="30" y="32" font-family="Liberation Sans" font-size="6.600" font-weight="bold">OPTIMIZATION</text><text x="30" y="41" font-family="Liberation Sans" font-size="6.600" font-weight="bold">MADE EASY</text></g>
<rect x="30" y="51" width="25" height="7" rx="3.500" fill="#fff"/>
<g class="ph"><rect x="101" y="18" width="70" height="41" fill="#b9b9b9"/>
<rect x="101" y="17" width="70" height="2" fill="#111"/><rect x="101" y="58" width="70" height="2" fill="#111"/>
<rect x="107" y="20" width="56" height="38" fill="#111" rx="2"/>
<rect x="109" y="23" width="52" height="33" fill="#fff"/>
<rect x="116" y="23" width="45" height="17" fill="#5c62b8"/><rect x="116" y="23" width="22" height="33" fill="#4c4ea8"/>
<rect x="138" y="40" width="23" height="16" fill="#707070"/><ellipse cx="150" cy="52" rx="5" ry="6" fill="#222"/>
<rect x="131" y="35" width="8" height="5" rx="1" fill="#222"/></g>
<g fill="none" stroke="#6a74c8" stroke-width="1"><circle cx="40" cy="96" r="7.500"/><circle cx="111" cy="96" r="7.500"/><circle cx="40" cy="121" r="7.500"/><circle cx="111" cy="121" r="7.500"/></g>
<g fill="#3d50a6"><rect x="37" y="94" width="6" height="4"/><rect x="108" y="93" width="6" height="6"/><rect x="37" y="119" width="6" height="4"/><circle cx="111" cy="121" r="3"/></g>
<g font-family="Liberation Sans" font-size="2.800" font-weight="bold" fill="#333"><text x="52" y="92">MANAGE 1000 DOCUMENTS</text><text x="123" y="92">AUTOMATE REPEATIVE TASKS</text><text x="52" y="117">FOLLOW CLIENT PAYMENTS</text><text x="123" y="117">SHARE TO THE CLOUD</text></g>
<g fill="#aaa"><rect x="52" y="96" width="41" height=".8"/><rect x="52" y="100" width="41" height=".8"/><rect x="52" y="103" width="24" height=".8"/><rect x="123" y="96" width="41" height=".8"/><rect x="123" y="100" width="41" height=".8"/><rect x="123" y="103" width="24" height=".8"/><rect x="52" y="121" width="41" height=".8"/><rect x="52" y="125" width="41" height=".8"/><rect x="52" y="128" width="24" height=".8"/><rect x="123" y="121" width="41" height=".8"/><rect x="123" y="125" width="41" height=".8"/><rect x="123" y="128" width="24" height=".8"/></g>
<rect y="143" width="199" height="42" fill="#ebebeb"/>
<text x="99.500" y="158.500" text-anchor="middle" font-family="Liberation Sans" font-size="4.300" letter-spacing=".2" fill="#555">CHOOSE THE PERFECT PLAN</text>
<g fill="#b5b5b5"><rect x="53" y="163.500" width="93" height=".8"/><rect x="68" y="167" width="63" height=".8"/></g>
<rect x="33" y="179" width="42" height="6" fill="#fff"/><rect x="79" y="178" width="42" height="7" fill="#3d50a6"/><rect x="126" y="179" width="42" height="6" fill="#fff"/>
</svg>

<!-- thumb 6 -->
<svg style="left:459px;top:577px" width="199" height="185" viewBox="0 0 199 185">
<rect width="199" height="185" fill="#fff"/>
<rect x="0" y="0" width="1" height="88" fill="#eee"/>
<rect x="27" y="23.500" width="22" height="1" fill="#7fded1"/>
<text x="27" y="36" font-family="Liberation Serif" font-weight="bold" font-size="9" fill="#27404a">Discover The</text>
<text x="27" y="46" font-family="Liberation Serif" font-weight="bold" font-size="9" fill="#27404a">Secrets Of Paris</text>
<g fill="#c8c8c8"><rect x="27" y="51" width="58" height=".8"/><rect x="27" y="54" width="48" height=".8"/></g>
<rect x="27" y="61" width="12" height="1" fill="#777"/>
<g fill="#555"><circle cx="10" cy="42" r="1"/><circle cx="10" cy="48" r="1.200"/><circle cx="10" cy="54" r="1"/></g>
<g class="ph">
<path d="M154 0h45v51c-14-7-26-9-35-6-12 5-22 17-30 28z" fill="#7a746d"/>
<path d="M134 73c10-14 20-26 30-28 9-3 21-1 35 6v4c-14-6-26-8-33-5-10 4-20 15-28 25z" fill="#a29d95"/>
<path d="M158 2l-14 50M175 0l-15 42M188 0l-6 38" stroke="#4c4844" stroke-width="1.400"/>
<path d="M171 21l28-5v22l-18 3z" fill="#5f9c55"/>
<path d="M147 87c2-20 20-32 36-30 8 1 14 4 16 8v22z" fill="#1b6b35"/>
<path d="M111 58c6-8 16-6 20 4v17h-20z" fill="#a9b999"/>
</g>
<rect x="27.500" y="75" width="153" height="20" fill="#fff"/>
<text x="33" y="82" font-family="Liberation Sans" font-size="2.800" fill="#888">Search And Book Tours For Your Dream</text>
<g fill="#aaa"><rect x="34" y="87" width="7" height=".8"/><rect x="63" y="87" width="10" height=".8"/><rect x="84" y="87" width="7" height=".8"/><rect x="112" y="87" width="8" height=".8"/></g>
<rect x="145" y="84" width="31" height="5" fill="#f9cf62"/>
<rect x="27" y="116" width="15" height="1.500" fill="#64d6c8"/>
<g font-family="Liberation Sans" font-size="4.400" fill="#777"><text x="27" y="126" textLength="60" lengthAdjust="spacingAndGlyphs">ENJOY AMAZING TOURS AROUND</text><text x="27" y="133" textLength="55" lengthAdjust="spacingAndGlyphs">PARIS WITH A GREAT TEAM OF</text><text x="27" y="140" textLength="29" lengthAdjust="spacingAndGlyphs">EXPERT GUIDES</text></g>
<g fill="#dcdcdc"><rect x="106" y="123" width="66" height=".9"/><rect x="106" y="127" width="66" height=".9"/><rect x="106" y="131" width="50" height=".9"/></g>
<rect x="106" y="138" width="10" height="1" fill="#888"/>
<rect x="1" y="161" width="35" height="24" fill="#dbe9ee"/><path class="ph" d="M1 185v-14l8-5 12 12 14 7z" fill="#343434"/>
<rect x="41" y="161" width="34" height="24" fill="#dbe8ec"/><rect x="55" y="166" width="4" height="19" fill="#a88d7e"/>
<text x="90" y="175" font-family="Liberation Serif" font-size="5.700" fill="#666">We Provide Special Tours</text>
<text x="90" y="182" font-family="Liberation Serif" font-size="5.700" fill="#666">And Events Across Paris.</text>
</svg>

<!-- thumb 7 -->
<svg style="left:707px;top:577px" width="199" height="185" viewBox="0 0 199 185">
<rect width="199" height="185" fill="#fff"/>
<rect x="27" y="23" width="16" height="1" fill="#7fded1"/>
<text x="27" y="35" font-family="Liberation Serif" font-weight="bold" font-size="7.800" fill="#27404a">We Are Happy To</text>
<text x="27" y="43" font-family="Liberation Serif" font-weight="bold" font-size="7.800" fill="#27404a">Guide You</text>
<g fill="#666"><circle cx="12" cy="30" r="1"/><circle cx="12" cy="36" r="1.200"/><circle cx="12" cy="41" r="1"/></g>
<g class="ph">
<rect x="112" y="0" width="87" height="65" fill="#a9cbd4"/>
<ellipse cx="138" cy="9" rx="18" ry="5" fill="#d9c0ae"/><ellipse cx="180" cy="14" rx="18" ry="4" fill="#d7d3cd"/>
<rect x="112" y="24" width="87" height="18" fill="#9a958e"/>
<path d="M112 30h87M112 35h87" stroke="#65645f" stroke-dasharray="3 2"/>
<path d="M112 42c25-4 60-2 87 0v23h-87z" fill="#a2a793"/>
<path d="M112 43c12 2 25 12 42 8 10 4 28 3 45-3v6c-16 5-32 5-43 2-16 3-33-4-44-4z" fill="#2d7d88"/>
<path d="M128 63c10-7 22-18 34-13 8 1 12-2 20-6-6 8-16 18-24 19z" fill="#36502f"/>
<rect x="112" y="62" width="87" height="3" fill="#1d3324"/>
</g>
<rect x="27" y="86" width="15" height="2" fill="#64d6c8"/>
<g font-family="Liberation Sans" font-size="4.400" fill="#6a6a6a"><text x="27" y="97" textLength="54" lengthAdjust="spacingAndGlyphs">WE LOVE TO EXPLORE NEW</text><text x="27" y="103" textLength="55" lengthAdjust="spacingAndGlyphs">WORLDWIDE DESTINATIONS</text></g>
<g fill="#dcdcdc"><rect x="104" y="93" width="69" height=".9"/><rect x="104" y="96" width="69" height=".9"/><rect x="104" y="99" width="69" height=".9"/><rect x="104" y="101.500" width="40" height=".9"/></g>
<g class="ph"><rect x="8" y="125" width="55" height="32" fill="#3f362d"/><path d="M12 154l20-24 28 13v11z" fill="#c2bbb0"/>
<rect x="67" y="125" width="40" height="48" fill="#dce8ea"/><path d="M70 172v-28l15-16 19 20v24z" fill="#6e6553"/><path d="M70 172l37-16v16z" fill="#7c8a5d"/>
<rect y="161" width="63" height="24" fill="#7db6e2"/><path d="M46 185l6-24h11v24z" fill="#2a3a2a"/><rect x="67" y="178" width="40" height="7" fill="#6fa8d8"/></g>
<rect x="113" y="137" width="16" height="1" fill="#7fded1"/>
<text x="113" y="145" font-family="Liberation Serif" font-size="5.300" fill="#555" textLength="59" lengthAdjust="spacingAndGlyphs">We Provide Special Tours</text>
<text x="113" y="152" font-family="Liberation Serif" font-size="5.300" fill="#555" textLength="56" lengthAdjust="spacingAndGlyphs">And Events Across Paris.</text>
<g fill="#d5d5d5"><rect x="124" y="158" width="47" height=".9"/><rect x="124" y="161" width="47" height=".9"/><rect x="124" y="164" width="30" height=".9"/><rect x="124" y="176" width="47" height=".9"/><rect x="124" y="180" width="47" height=".9"/></g>
<rect x="124" y="171" width="14" height="1" fill="#64d6c8"/>
</svg>

<!-- thumb 8 -->
<svg style="left:955px;top:577px" width="199" height="185" viewBox="0 0 199 185">
<rect width="199" height="185" fill="#fff"/>
<rect x="0" y="10" width="1" height="60" fill="#e6e6e6"/>
<rect x="28" y="23" width="13" height="1" fill="#7fded1"/>
<text x="28" y="34" font-family="Liberation Serif" font-weight="bold" font-size="7.600" fill="#2c4a63">The Most Amazing</text>
<text x="28" y="43" font-family="Liberation Serif" font-weight="bold" font-size="7.600" fill="#2c4a63">Tours In Paris</text>
<g fill="#666"><circle cx="12" cy="31" r="1"/><circle cx="12" cy="37" r="1.200"/><circle cx="12" cy="43" r="1"/></g>
<g class="ph">
<path d="M112 0h20v16h67v42h-87z" fill="#b3714f"/>
<rect x="112" y="0" width="20" height="16" fill="#8f5a42"/>
<g fill="#e0ad88"><rect x="112" y="18" width="87" height="3"/><rect x="112" y="34" width="87" height="2"/></g>
<g fill="#6d3f2d"><rect x="117" y="23" width="5" height="9"/><rect x="126" y="23" width="5" height="9"/><rect x="135" y="23" width="5" height="9"/><rect x="144" y="23" width="5" height="9"/><rect x="153" y="23" width="5" height="9"/><rect x="162" y="23" width="5" height="9"/><rect x="171" y="23" width="5" height="9"/><rect x="180" y="23" width="5" height="9"/><rect x="189" y="23" width="5" height="9"/><rect x="117" y="38" width="5" height="12"/><rect x="190" y="38" width="5" height="12"/></g>
<path d="M134 58l26-28 26 28z" fill="#bcd3df"/><path d="M160 30l-8 28h16z" fill="#e6f0f5"/>
<rect x="112" y="56" width="87" height="9" fill="#f3ece6"/>
<path d="M112 56l18 9h-18z" fill="#6a5548"/>
</g>
<rect x="93" y="85" width="14" height="2" fill="#64d6c8"/>
<g font-family="Liberation Sans" font-size="4.400" fill="#666" text-anchor="middle"><text x="99.500" y="96" textLength="78" lengthAdjust="spacingAndGlyphs">WE TRAVELED ALL AROUND PARIS AND</text><text x="99.500" y="102" textLength="78" lengthAdjust="spacingAndGlyphs">CREATED THE PERFECT TOURS FOR YOU</text></g>
<g fill="#d5d5d5"><rect x="57" y="105" width="85" height=".8"/><rect x="67" y="107.500" width="65" height=".8"/></g>
<text x="10" y="151" font-family="Liberation Serif" font-size="6.500" fill="#666">Explore Our Tours</text>
<g fill="#d5d5d5"><rect x="10" y="157" width="68" height=".9"/><rect x="10" y="161" width="68" height=".9"/><rect x="10" y="165" width="50" height=".9"/></g>
<g class="ph"><rect x="82" y="129" width="34" height="49" fill="#c8dfe7"/><path d="M82 160l3-22 12-3 19 20v7z" fill="#3c4042"/><rect x="82" y="160" width="34" height="18" fill="#d7dfe2"/>
<rect x="120" y="129" width="33" height="49" fill="#d6e5e7"/><path d="M134 168l2-30h1l2 30z" fill="#a9793e"/><rect x="120" y="168" width="33" height="10" fill="#7a8f88"/>
<rect x="157" y="129" width="34" height="49" fill="#bfd6e2"/><path d="M157 178v-28l8-4 4-18h6l2 14 14 6v30z" fill="#86796b"/>
<rect x="82" y="181" width="34" height="4" fill="#2d85c8"/><rect x="120" y="181" width="33" height="4" fill="#8a5a3e"/><rect x="157" y="181" width="34" height="4" fill="#332e2a"/></g>
</svg>

<!-- PRO badges -->
<div class="a" style="left:626px;top:583px;width:27px;height:16px;background:#e91e5b;border-radius:2px;color:#fff;font-size:11px;font-weight:bold;text-align:center;line-height:16px">PRO</div>
<div class="a" style="left:873px;top:583px;width:28px;height:16px;background:#e91e5b;border-radius:2px;color:#fff;font-size:11px;font-weight:bold;text-align:center;line-height:16px">PRO</div>
<div class="a" style="left:1122px;top:583px;width:27px;height:16px;background:#e91e5b;border-radius:2px;color:#fff;font-size:11px;font-weight:bold;text-align:center;line-height:16px">PRO</div>

<!-- Red highlight -->
<div class="a" style="left:442px;top:271px;width:241px;height:282px;border:10.500px solid #ff0048"></div>

<!-- hand cursor -->
<svg style="left:483px;top:524px" width="17" height="21" viewBox="0 0 17 21"><path d="M4 2c0-2 3-2 3 0v6c1-1 3-1 3 .5 1-1 3-.8 3 .7 1-.6 3-.2 3 1.300V16c0 2-2 4-4 4H8c-2 0-3-2-4-3L1 12c-1-2 1-3 2.500-1.500L4 11z" fill="#fff" stroke="#111" stroke-width="1"/><path d="M7 15v3M10 15v3M13 15v3" stroke="#111"/></svg>

</div></body></html>
